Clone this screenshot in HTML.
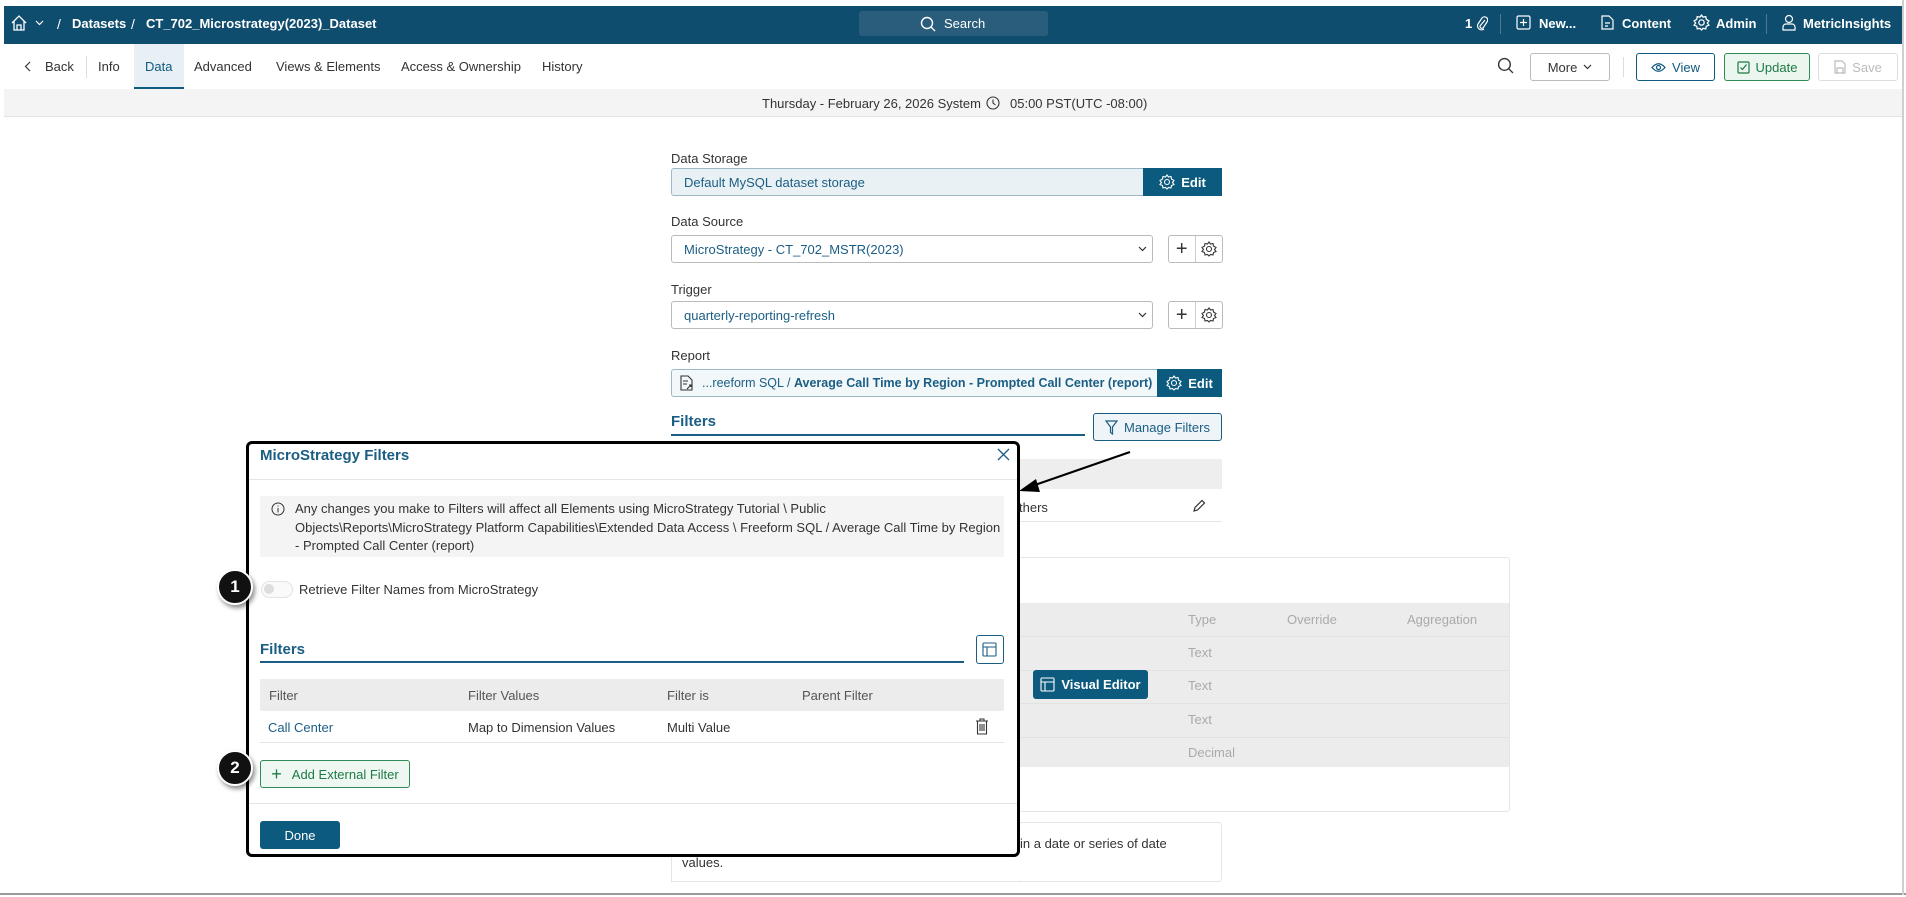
<!DOCTYPE html>
<html><head><meta charset="utf-8"><style>
*{box-sizing:border-box;margin:0;padding:0}
body{width:1906px;height:897px;position:relative;overflow:hidden;background:#fff;font-family:"Liberation Sans",sans-serif;font-size:13px;color:#333}
.a{position:absolute}
.t{position:absolute;white-space:nowrap}
.btn{position:absolute;border:1px solid #bbb;border-radius:3px;background:#fff;display:flex;align-items:center;justify-content:center;gap:6px;font-size:13px}
.lbl{position:absolute;font-size:13px;color:#333}
.sel{position:absolute;border:1px solid #bbb;border-radius:3px;background:#fff;color:#1b5e84;font-size:13px;padding-left:12px;display:flex;align-items:center;white-space:nowrap;overflow:hidden}
.edit{position:absolute;background:#0d5a7f;color:#fff;display:flex;align-items:center;justify-content:center;gap:6px;font-size:13px;font-weight:bold}
</style></head><body>
<!-- top bar -->
<div class="a" style="left:4px;top:6px;width:1898px;height:38px;background:#0f4d6e"></div>
<svg class="a" style="left:10px;top:15px" width="18" height="16" viewBox="0 0 18 16" fill="none" stroke="#fff" stroke-width="1.3"><path d="M2 8 L9 1 L16 8 M4 6 V15 H14 V6 M7 15 V10 H11 V15"/></svg>
<svg class="a" style="left:35px;top:20px" width="9" height="6" viewBox="0 0 9 6" fill="none" stroke="#fff" stroke-width="1.2"><path d="M1 1 L4.5 4.5 L8 1"/></svg>
<div class="t" style="left:57px;top:16px;color:#fff;font-size:14px">/</div>
<div class="t" style="left:72px;top:16px;color:#fff;font-size:13px;font-weight:bold">Datasets</div>
<div class="t" style="left:131px;top:16px;color:#fff;font-size:14px">/</div>
<div class="t" style="left:146px;top:16px;color:#fff;font-size:13px;font-weight:bold">CT_702_Microstrategy(2023)_Dataset</div>
<div class="a" style="left:859px;top:11px;width:189px;height:25px;background:#2a5d7c;border-radius:3px"></div>
<svg class="a" style="left:920px;top:16px" width="16" height="16" viewBox="0 0 16 16" fill="none" stroke="#fff" stroke-width="1.4"><circle cx="7" cy="7" r="5.5"/><path d="M11 11 L15 15"/></svg>
<div class="t" style="left:944px;top:16px;color:#fff;font-size:13px">Search</div>
<div class="t" style="left:1465px;top:16px;color:#fff;font-size:13px;font-weight:bold">1</div>
<svg class="a" style="left:1476px;top:15px" width="12" height="16" viewBox="0 0 12 16" fill="none" stroke="#fff" stroke-width="1.2"><path d="M9 5 L4 11 a2 2 0 0 0 3 2 L11 7 a3 3 0 0 0 -5-4 L2 9 a4 4 0 0 0 6 5"/></svg>
<div class="a" style="left:1500px;top:14px;width:1px;height:20px;background:#4f7891"></div>
<svg class="a" style="left:1516px;top:15px" width="15" height="15" viewBox="0 0 15 15" fill="none" stroke="#fff" stroke-width="1.2"><rect x="1" y="1" width="13" height="13" rx="1.5"/><path d="M7.5 4 V11 M4 7.5 H11"/></svg>
<div class="t" style="left:1539px;top:16px;color:#fff;font-weight:bold">New...</div>
<svg class="a" style="left:1600px;top:15px" width="15" height="15" viewBox="0 0 15 15" fill="none" stroke="#fff" stroke-width="1.2"><path d="M2 1 H9 L13 5 V14 H2 Z M5 8 H10 M5 11 H8"/></svg>
<div class="t" style="left:1622px;top:16px;color:#fff;font-weight:bold">Content</div>
<svg class="a" style="left:1693px;top:14px" width="17" height="17" viewBox="0 0 16 16" fill="none" stroke="#fff" stroke-width="1.2"><circle cx="8" cy="8" r="2.5"/><path d="M8 1 L9.5 3 L12 2.5 L12.5 5 L15 6.5 L13.5 8.5 L15 10.5 L12.5 11.5 L12 14 L9.5 13.5 L8 15 L6.5 13.5 L4 14 L3.5 11.5 L1 10.5 L2.5 8.5 L1 6.5 L3.5 5 L4 2.5 L6.5 3 Z"/></svg>
<div class="t" style="left:1716px;top:16px;color:#fff;font-weight:bold">Admin</div>
<div class="a" style="left:1766px;top:14px;width:1px;height:20px;background:#4f7891"></div>
<svg class="a" style="left:1782px;top:14px" width="14" height="17" viewBox="0 0 14 17" fill="none" stroke="#fff" stroke-width="1.2"><circle cx="7" cy="5" r="3.5"/><path d="M1 16 V13 a3 3 0 0 1 3-3 H10 a3 3 0 0 1 3 3 V16 Z"/></svg>
<div class="t" style="left:1803px;top:16px;color:#fff;font-weight:bold">MetricInsights</div>

<!-- nav -->
<div class="a" style="left:134px;top:44px;width:50px;height:45px;background:#e8f0f5;border-bottom:2px solid #0f5a80"></div>
<svg class="a" style="left:24px;top:61px" width="7" height="11" viewBox="0 0 7 11" fill="none" stroke="#333" stroke-width="1.2"><path d="M6 1 L1.5 5.5 L6 10"/></svg>
<div class="t" style="left:45px;top:59px">Back</div>
<div class="a" style="left:86px;top:56px;width:1px;height:22px;background:#ddd"></div>
<div class="t" style="left:98px;top:59px">Info</div>
<div class="t" style="left:145px;top:59px;color:#0f5a80">Data</div>
<div class="t" style="left:194px;top:59px">Advanced</div>
<div class="t" style="left:276px;top:59px">Views &amp; Elements</div>
<div class="t" style="left:401px;top:59px">Access &amp; Ownership</div>
<div class="t" style="left:542px;top:59px">History</div>
<svg class="a" style="left:1497px;top:57px" width="17" height="17" viewBox="0 0 16 16" fill="none" stroke="#333" stroke-width="1.3"><circle cx="7" cy="7" r="5.5"/><path d="M11 11 L15 15"/></svg>
<div class="btn" style="left:1530px;top:53px;width:80px;height:28px">More <svg width="9" height="6" viewBox="0 0 9 6" fill="none" stroke="#333" stroke-width="1.2"><path d="M1 1 L4.5 4.5 L8 1"/></svg></div>
<div class="a" style="left:1623px;top:57px;width:1px;height:20px;background:#ddd"></div>
<div class="btn" style="left:1636px;top:53px;width:79px;height:28px;border-color:#0f5a80;color:#0f5a80"><svg width="15" height="11" viewBox="0 0 15 11" fill="none" stroke="#0f5a80" stroke-width="1.2"><path d="M1 5.5 Q7.5 -2 14 5.5 Q7.5 13 1 5.5Z"/><circle cx="7.5" cy="5.5" r="2"/></svg>View</div>
<div class="btn" style="left:1724px;top:53px;width:86px;height:28px;border-color:#2e8b57;background:#eaf6ee;color:#1e7a46"><svg width="13" height="13" viewBox="0 0 13 13" fill="none" stroke="#1e7a46" stroke-width="1.2"><rect x="1" y="1" width="11" height="11" rx="1"/><path d="M3.5 6.5 L5.5 8.5 L9.5 3.5"/></svg>Update</div>
<div class="btn" style="left:1818px;top:53px;width:80px;height:28px;border-color:#ddd;color:#bbb"><svg width="12" height="14" viewBox="0 0 12 14" fill="none" stroke="#bbb" stroke-width="1.2"><path d="M1 1 H8 L11 4 V13 H1Z M3 13 V8 H9 V13"/></svg>Save</div>

<!-- date bar -->
<div class="a" style="left:4px;top:89px;width:1898px;height:28px;background:#f4f4f4;border-bottom:1px solid #e2e2e2"></div>
<div class="t" style="left:762px;top:96px">Thursday - February 26, 2026 System</div>
<svg class="a" style="left:986px;top:96px" width="14" height="14" viewBox="0 0 14 14" fill="none" stroke="#333" stroke-width="1.1"><circle cx="7" cy="7" r="6"/><path d="M7 3.5 V7 L9.5 9"/></svg>
<div class="t" style="left:1010px;top:96px">05:00 PST(UTC -08:00)</div>

<!-- main column -->
<div class="lbl" style="left:671px;top:151px">Data Storage</div>
<div class="sel" style="left:671px;top:168px;width:480px;height:28px;background:#e9f1f5;border-color:#9fb8c7;color:#1b5e84">Default MySQL dataset storage</div>
<div class="edit" style="left:1143px;top:168px;width:79px;height:28px"><svg width="16" height="16" viewBox="0 0 16 16" fill="none" stroke="#fff" stroke-width="1.1"><circle cx="8" cy="8" r="2.5"/><path d="M8 1 L9.5 3 L12 2.5 L12.5 5 L15 6.5 L13.5 8.5 L15 10.5 L12.5 11.5 L12 14 L9.5 13.5 L8 15 L6.5 13.5 L4 14 L3.5 11.5 L1 10.5 L2.5 8.5 L1 6.5 L3.5 5 L4 2.5 L6.5 3 Z"/></svg>Edit</div>

<div class="lbl" style="left:671px;top:214px">Data Source</div>
<div class="sel" style="left:671px;top:235px;width:482px;height:28px">MicroStrategy - CT_702_MSTR(2023)</div>
<svg class="a" style="left:1138px;top:246px" width="9" height="6" viewBox="0 0 9 6" fill="none" stroke="#333" stroke-width="1.2"><path d="M1 1 L4.5 4.5 L8 1"/></svg>
<div class="btn" style="left:1168px;top:235px;width:55px;height:28px;gap:0;justify-content:flex-start"><div style="width:27px;height:26px;border-right:1px solid #ccc;display:flex;align-items:center;justify-content:center;font-size:20px;color:#333">+</div><div style="width:27px;display:flex;justify-content:center"><svg width="16" height="16" viewBox="0 0 16 16" fill="none" stroke="#333" stroke-width="1.1"><circle cx="8" cy="8" r="2.5"/><path d="M8 1 L9.5 3 L12 2.5 L12.5 5 L15 6.5 L13.5 8.5 L15 10.5 L12.5 11.5 L12 14 L9.5 13.5 L8 15 L6.5 13.5 L4 14 L3.5 11.5 L1 10.5 L2.5 8.5 L1 6.5 L3.5 5 L4 2.5 L6.5 3 Z"/></svg></div></div>

<div class="lbl" style="left:671px;top:282px">Trigger</div>
<div class="sel" style="left:671px;top:301px;width:482px;height:28px">quarterly-reporting-refresh</div>
<svg class="a" style="left:1138px;top:312px" width="9" height="6" viewBox="0 0 9 6" fill="none" stroke="#333" stroke-width="1.2"><path d="M1 1 L4.5 4.5 L8 1"/></svg>
<div class="btn" style="left:1168px;top:301px;width:55px;height:28px;gap:0;justify-content:flex-start"><div style="width:27px;height:26px;border-right:1px solid #ccc;display:flex;align-items:center;justify-content:center;font-size:20px;color:#333">+</div><div style="width:27px;display:flex;justify-content:center"><svg width="16" height="16" viewBox="0 0 16 16" fill="none" stroke="#333" stroke-width="1.1"><circle cx="8" cy="8" r="2.5"/><path d="M8 1 L9.5 3 L12 2.5 L12.5 5 L15 6.5 L13.5 8.5 L15 10.5 L12.5 11.5 L12 14 L9.5 13.5 L8 15 L6.5 13.5 L4 14 L3.5 11.5 L1 10.5 L2.5 8.5 L1 6.5 L3.5 5 L4 2.5 L6.5 3 Z"/></svg></div></div>

<div class="lbl" style="left:671px;top:348px">Report</div>
<div class="sel" style="left:671px;top:369px;width:490px;height:28px;background:#f2f7fa;border-color:#9fb8c7;padding-left:8px;font-size:12.5px"><svg width="14" height="17" viewBox="0 0 14 17" fill="none" stroke="#333" stroke-width="1.1" style="flex:none"><path d="M1 1 H8 L12 5 V15 H1Z M3 6 H8 M3 9 H7 M7 14 L11 10 M9 10 H11 V12"/></svg><span style="margin-left:8px;white-space:nowrap">...reeform SQL / <b>Average Call Time by Region - Prompted Call Center (report)</b></span></div>
<div class="edit" style="left:1157px;top:369px;width:65px;height:28px"><svg width="16" height="16" viewBox="0 0 16 16" fill="none" stroke="#fff" stroke-width="1.1"><circle cx="8" cy="8" r="2.5"/><path d="M8 1 L9.5 3 L12 2.5 L12.5 5 L15 6.5 L13.5 8.5 L15 10.5 L12.5 11.5 L12 14 L9.5 13.5 L8 15 L6.5 13.5 L4 14 L3.5 11.5 L1 10.5 L2.5 8.5 L1 6.5 L3.5 5 L4 2.5 L6.5 3 Z"/></svg>Edit</div>

<div class="t" style="left:671px;top:413px;font-size:15px;font-weight:bold;color:#1b5e84">Filters</div>
<div class="a" style="left:671px;top:434px;width:414px;height:2px;background:#1b5e84"></div>
<div class="btn" style="left:1093px;top:413px;width:129px;height:28px;border-color:#1b5e84;background:#eef4f8;color:#1b5e84"><svg width="13" height="15" viewBox="0 0 13 15" fill="none" stroke="#1b5e84" stroke-width="1.2"><path d="M1 1 H12 L7.5 7 V14 L5.5 12.5 V7 Z"/></svg>Manage Filters</div>

<div class="a" style="left:1019px;top:459px;width:203px;height:30px;background:#eee"></div>
<div class="t" style="left:1019px;top:500px">thers</div>
<svg class="a" style="left:1192px;top:499px" width="14" height="14" viewBox="0 0 14 14" fill="none" stroke="#333" stroke-width="1.2"><path d="M2 12 L3 8.5 L10 1.5 L12.5 4 L5.5 11 Z"/></svg>
<div class="a" style="left:1019px;top:521px;width:203px;height:1px;background:#e5e5e5"></div>

<div class="a" style="left:1019px;top:557px;width:491px;height:255px;border:1px solid #e5e5e5;border-radius:3px;border-left:none"></div>
<div class="a" style="left:1019px;top:603px;width:490px;height:164px;background:#ececec"></div>
<div class="a" style="left:1019px;top:636px;width:490px;height:1px;background:#e2e2e2"></div>
<div class="a" style="left:1019px;top:670px;width:490px;height:1px;background:#e2e2e2"></div>
<div class="a" style="left:1019px;top:703px;width:490px;height:1px;background:#e2e2e2"></div>
<div class="a" style="left:1019px;top:737px;width:490px;height:1px;background:#e2e2e2"></div>
<div class="t" style="left:1188px;top:612px;color:#aaa">Type</div>
<div class="t" style="left:1287px;top:612px;color:#aaa">Override</div>
<div class="t" style="left:1407px;top:612px;color:#aaa">Aggregation</div>
<div class="t" style="left:1188px;top:645px;color:#aaa">Text</div>
<div class="t" style="left:1188px;top:678px;color:#aaa">Text</div>
<div class="t" style="left:1188px;top:712px;color:#aaa">Text</div>
<div class="t" style="left:1188px;top:745px;color:#aaa">Decimal</div>
<div class="edit" style="left:1033px;top:670px;width:115px;height:29px;border-radius:3px"><svg width="15" height="15" viewBox="0 0 15 15" fill="none" stroke="#fff" stroke-width="1.1"><rect x="1" y="1" width="13" height="13" rx="1"/><path d="M1 5 H14 M5 5 V14"/></svg>Visual Editor</div>

<div class="a" style="left:1019px;top:822px;width:203px;height:60px;border:1px solid #e5e5e5;border-left:none;border-radius:3px"></div>
<div class="t" style="left:1020px;top:836px">in a date or series of date</div>
<div class="t" style="left:682px;top:855px">values.</div>
<div class="a" style="left:671px;top:822px;width:350px;height:60px;border:1px solid #e5e5e5;border-right:none"></div>

<div class="a" style="left:0;top:893px;width:1906px;height:2px;background:#9a9a9a"></div>
<div class="a" style="left:1902px;top:0;width:2px;height:895px;background:#cfcfcf"></div>

<!-- modal -->
<div class="a" style="left:246px;top:441px;width:774px;height:416px;border:3px solid #000;border-radius:6px;background:#fff"></div>
<div class="t" style="left:260px;top:447px;font-size:15px;font-weight:bold;color:#1b5e84">MicroStrategy Filters</div>
<svg class="a" style="left:997px;top:448px" width="13" height="13" viewBox="0 0 13 13" fill="none" stroke="#1b5e84" stroke-width="1.3"><path d="M1 1 L12 12 M12 1 L1 12"/></svg>
<div class="a" style="left:249px;top:479px;width:768px;height:1px;background:#e5e5e5"></div>
<div class="a" style="left:260px;top:496px;width:744px;height:61px;background:#f4f4f4"></div>
<svg class="a" style="left:271px;top:502px" width="14" height="14" viewBox="0 0 14 14" fill="none" stroke="#333" stroke-width="1"><circle cx="7" cy="7" r="6"/><path d="M7 6 V10.5 M7 3.5 V4.5"/></svg>
<div class="a" style="left:295px;top:500px;font-size:13px;line-height:18.5px;width:710px;color:#333;white-space:nowrap">Any changes you make to Filters will affect all Elements using MicroStrategy Tutorial \ Public<br>Objects\Reports\MicroStrategy Platform Capabilities\Extended Data Access \ Freeform SQL / Average Call Time by Region<br>- Prompted Call Center (report)</div>
<div class="a" style="left:261px;top:581px;width:32px;height:17px;border:1px solid #e3e3e3;border-radius:9px;background:#fafafa"></div>
<div class="a" style="left:264px;top:584px;width:10px;height:10px;border-radius:50%;background:#ddd"></div>
<div class="t" style="left:299px;top:582px">Retrieve Filter Names from MicroStrategy</div>

<div class="t" style="left:260px;top:641px;font-size:15px;font-weight:bold;color:#1b5e84">Filters</div>
<div class="a" style="left:260px;top:661px;width:704px;height:2px;background:#1b5e84"></div>
<div class="a" style="left:976px;top:635px;width:28px;height:29px;border:1px solid #1b5e84;border-radius:3px"></div>
<svg class="a" style="left:982px;top:642px" width="15" height="15" viewBox="0 0 15 15" fill="none" stroke="#1b5e84" stroke-width="1.1"><rect x="1" y="1" width="13" height="13" rx="1"/><path d="M1 5 H14 M5 5 V14"/></svg>
<div class="a" style="left:260px;top:679px;width:744px;height:32px;background:#ececec;border-radius:2px"></div>
<div class="t" style="left:269px;top:688px;color:#555">Filter</div>
<div class="t" style="left:468px;top:688px;color:#555">Filter Values</div>
<div class="t" style="left:667px;top:688px;color:#555">Filter is</div>
<div class="t" style="left:802px;top:688px;color:#555">Parent Filter</div>
<div class="t" style="left:268px;top:720px;color:#1b5e84">Call Center</div>
<div class="t" style="left:468px;top:720px">Map to Dimension Values</div>
<div class="t" style="left:667px;top:720px">Multi Value</div>
<svg class="a" style="left:975px;top:718px" width="14" height="17" viewBox="0 0 14 17" fill="none" stroke="#333" stroke-width="1.1"><path d="M1 3 H13 M5 3 V1 H9 V3 M2.5 3 V16 H11.5 V3 M5 6 V13 M7 6 V13 M9 6 V13"/></svg>
<div class="a" style="left:260px;top:742px;width:744px;height:1px;background:#e5e5e5"></div>
<div class="btn" style="left:260px;top:760px;width:150px;height:28px;border-color:#2e8b57;background:#eef7f1;color:#1e7a46;gap:10px"><span style="font-size:18px;line-height:1">+</span>Add External Filter</div>
<div class="a" style="left:249px;top:803px;width:768px;height:1px;background:#e5e5e5"></div>
<div class="edit" style="left:260px;top:821px;width:80px;height:28px;border-radius:3px;font-weight:normal">Done</div>

<!-- badges -->
<div class="a" style="left:217px;top:569px;width:36px;height:36px;border-radius:50%;background:#111;border:2px solid #fff;box-shadow:2px 3px 5px rgba(0,0,0,.45);color:#fff;font-weight:bold;font-size:17px;display:flex;align-items:center;justify-content:center">1</div>
<div class="a" style="left:217px;top:750px;width:36px;height:36px;border-radius:50%;background:#111;border:2px solid #fff;box-shadow:2px 3px 5px rgba(0,0,0,.45);color:#fff;font-weight:bold;font-size:17px;display:flex;align-items:center;justify-content:center">2</div>

<!-- arrow -->
<svg class="a" style="left:1010px;top:445px" width="130" height="55" viewBox="0 0 130 55"><path d="M120 7 L22 41" stroke="#000" stroke-width="2.2"/><path d="M9 46 L26 34 L30 47 Z" fill="#000"/></svg>
</body></html>
